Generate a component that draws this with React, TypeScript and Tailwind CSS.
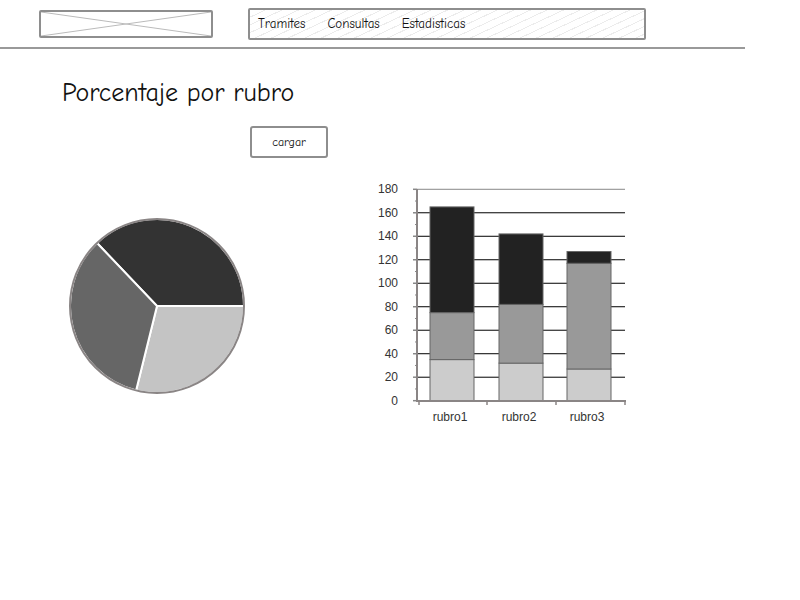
import React from "react"

const font = { fontFamily: "'Comic Sans MS', 'Comic Neue', 'Open Sans', sans-serif" }

const bars = [
  { name: "rubro1", x: 60, parts: [35, 40, 90] },
  { name: "rubro2", x: 129, parts: [32, 50, 60] },
  { name: "rubro3", x: 197, parts: [27, 90, 10] },
]
const fills = ["#cccccc", "#999999", "#222222"]
const y = (v: number) => 220.7 - v * 1.1745

function PieChart() {
  return (
    <svg width="180" height="180" viewBox="0 0 180 180">
      <path d="M90 90 L30 27 A87 87 0 0 1 177 90 Z" fill="#333333" stroke="#fff" strokeWidth="2" />
      <path d="M90 90 L177 90 A87 87 0 0 1 69.1 174.5 Z" fill="#c4c4c4" stroke="#fff" strokeWidth="2" />
      <path d="M90 90 L69.1 174.5 A87 87 0 0 1 30 27 Z" fill="#666666" stroke="#fff" strokeWidth="2" />
      <circle cx="90" cy="90" r="87" fill="none" stroke="#8a8585" strokeWidth="2" />
    </svg>
  )
}

function BarChart() {
  const ticks = [0, 20, 40, 60, 80, 100, 120, 140, 160, 180]
  return (
    <svg width="270" height="250" viewBox="0 0 270 250" style={{ fontFamily: "'Liberation Sans', Arial, sans-serif" }}>
      {ticks.map((t) => (
        <g key={t}>
          <line x1="47" x2="255" y1={y(t)} y2={y(t)} stroke={t === 180 ? "#888" : "#000"} strokeWidth="1" />
          <text x="28" y={y(t) + 4} fontSize="12" fill="#333" textAnchor="end">{t}</text>
          <line x1="43" x2="47" y1={y(t)} y2={y(t)} stroke="#888" strokeWidth="1.5" />
          {t < 180 && <line x1="45" x2="47" y1={y(t + 10)} y2={y(t + 10)} stroke="#888" strokeWidth="1" />}
        </g>
      ))}
      {bars.map((b) => {
        let acc = 0
        return (
          <g key={b.name}>
            {b.parts.map((p, i) => {
              const top = y(acc + p)
              const bottom = y(acc)
              acc += p
              return (
                <rect key={i} x={b.x} y={top} width="44" height={bottom - top} fill={fills[i]} stroke="#666" strokeWidth="1" />
              )
            })}
            <text x={b.x + 20} y="241" fontSize="12" fill="#333" textAnchor="middle">{b.name}</text>
          </g>
        )
      })}
      <line x1="47" x2="47" y1="9" y2="222" stroke="#8a8585" strokeWidth="2" />
      <line x1="46" x2="256" y1="221" y2="221" stroke="#8a8585" strokeWidth="2" />
      {[49, 117, 186, 255].map((x) => (
        <line key={x} x1={x} x2={x} y1="221" y2="225" stroke="#8a8585" strokeWidth="1.5" />
      ))}
    </svg>
  )
}

export default function App() {
  return (
    <div className="w-[800px] h-[600px] bg-white relative overflow-hidden text-[#111]" style={font}>
      {/* header */}
      <div className="flex items-start pt-[8px]">
        <div className="ml-[39px] mt-[2px] w-[174px] h-[28px] border-2 border-[#8e8e8e] rounded-[2px]">
          <svg width="170" height="24" viewBox="0 0 170 24" className="block">
            <line x1="0" y1="0" x2="170" y2="24" stroke="#bbb" strokeWidth="1" />
            <line x1="0" y1="24" x2="170" y2="0" stroke="#bbb" strokeWidth="1" />
          </svg>
        </div>
        <div className="ml-[35px] w-[398px] h-[32px] border-2 border-[#8e8e8e] rounded-[2px] flex items-center pl-[8px] gap-[22px] text-[13px] bg-[repeating-linear-gradient(155deg,#ffffff_0px,#ffffff_6px,#ececec_6px,#ececec_7px)]">
          <span>Tramites</span>
          <span>Consultas</span>
          <span>Estadisticas</span>
        </div>
      </div>
      <div className="mt-[7px] w-[745px] h-[2px] bg-[#999]" />

      {/* title */}
      <h1 className="ml-[62px] mt-[27px] text-[26px] leading-[34px]">Porcentaje por rubro</h1>

      <div className="ml-[250px] mt-[16px] w-[78px] h-[32px] border-2 border-[#8e8e8e] rounded-[3px] flex items-center justify-center text-[12px]">
        cargar
      </div>

      {/* charts */}
      <div className="flex items-start mt-[22px]">
        <div className="ml-[67px] mt-[36px]">
          <PieChart />
        </div>
        <div className="ml-[123px]">
          <BarChart />
        </div>
      </div>
    </div>
  )
}
